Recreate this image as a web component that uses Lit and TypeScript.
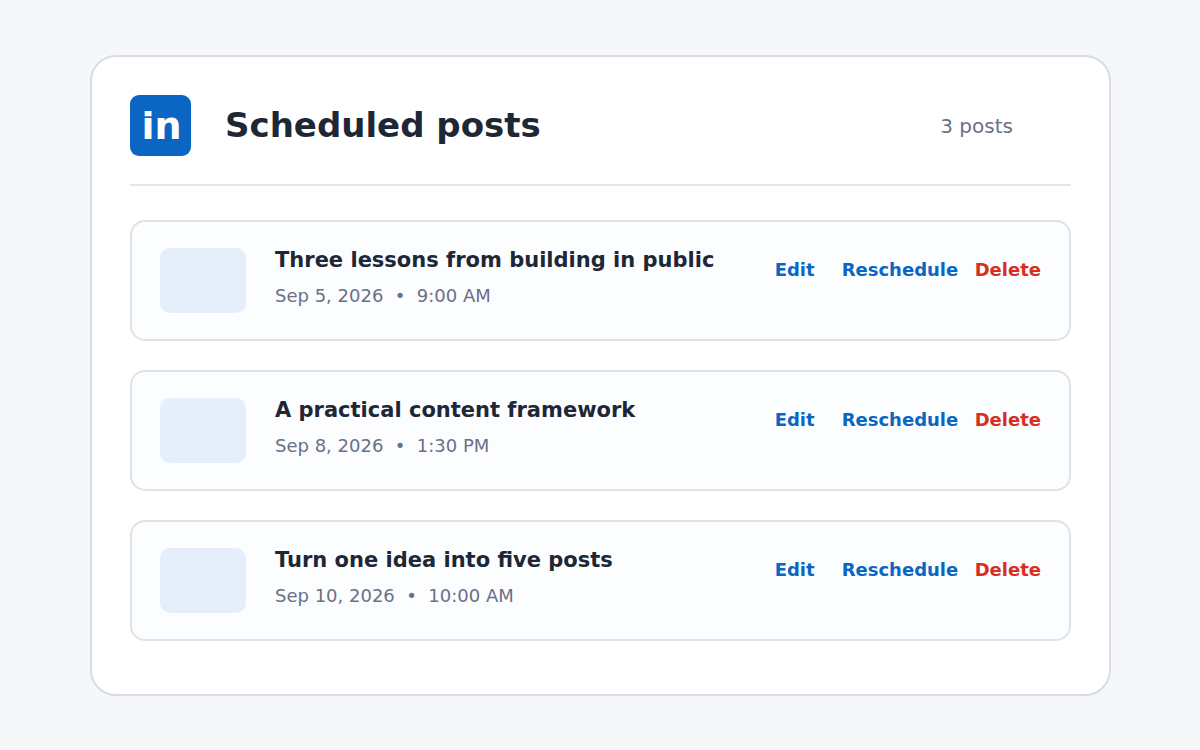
import { LitElement, html, css } from "lit";
import { customElement, property, state } from "lit/decorators.js";

interface Post {
  title: string;
  date: string;
  time: string;
}

@customElement("post-card")
class PostCard extends LitElement {
  @property({ attribute: false }) post!: Post;

  static styles = css`
    :host {
      display: block;
    }
    .card {
      box-sizing: border-box;
      display: flex;
      align-items: flex-start;
      gap: 29px;
      padding: 26px 28px;
      border: 2px solid #dfe3e6;
      border-radius: 15px;
      background: #fbfdff;
    }
    .thumb {
      flex: none;
      width: 86px;
      height: 65px;
      border-radius: 10px;
      background: #e5effc;
    }
    .info {
      flex: 1;
      min-width: 0;
    }
    .title {
      margin: 0;
      font-size: 21px;
      line-height: 24px;
      font-weight: 700;
      color: #1d2735;
    }
    .when {
      margin: 12px 0 0;
      font-size: 18px;
      line-height: 24px;
      color: #6a7086;
      white-space: pre;
    }
    .actions {
      display: grid;
      grid-template-columns: 67px 133px auto;
      padding-top: 10px;
    }
    .action {
      justify-self: start;
      margin: 0;
      padding: 0;
      border: 0;
      background: none;
      font: inherit;
      font-size: 18px;
      line-height: 24px;
      font-weight: 700;
      color: #0a66c2;
      cursor: pointer;
    }
    .danger {
      color: #d92d20;
    }
  `;

  render() {
    return html`
      <article class="card">
        <div class="thumb"></div>
        <div class="info">
          <h2 class="title">${this.post.title}</h2>
          <p class="when">${`${this.post.date}  •  ${this.post.time}`}</p>
        </div>
        <div class="actions">
          <button class="action" type="button">Edit</button>
          <button class="action" type="button">Reschedule</button>
          <button class="action danger" type="button">Delete</button>
        </div>
      </article>
    `;
  }
}

@customElement("app-root")
class AppRoot extends LitElement {
  @state() private posts: Post[] = [
    { title: "Three lessons from building in public", date: "Sep 5, 2026", time: "9:00 AM" },
    { title: "A practical content framework", date: "Sep 8, 2026", time: "1:30 PM" },
    { title: "Turn one idea into five posts", date: "Sep 10, 2026", time: "10:00 AM" },
  ];

  static styles = css`
    :host {
      display: block;
      box-sizing: border-box;
      min-height: 100vh;
      padding: 55px 89px 54px 90px;
      background: #f5f7f9;
      font-family: "DejaVu Sans", sans-serif;
    }
    .panel {
      padding: 38px 38px 53px;
      border: 2px solid #d7dde3;
      border-radius: 26px;
      background: #ffffff;
    }
    .header {
      display: flex;
      align-items: center;
      gap: 34px;
      padding: 0 58px 28px 0;
      border-bottom: 2px solid #e4e7ea;
    }
    .logo {
      box-sizing: border-box;
      flex: none;
      width: 61px;
      height: 61px;
      padding: 1px 0 0 2px;
      border-radius: 9px;
      background: #0a66c2;
      color: #ffffff;
      font-size: 38px;
      line-height: 60px;
      font-weight: 700;
      text-align: center;
    }
    .heading {
      flex: 1;
      margin: 0;
      font-size: 34px;
      line-height: 41px;
      font-weight: 700;
      color: #1d2735;
    }
    .count {
      font-size: 20px;
      line-height: 24px;
      color: #6a7086;
    }
    .list {
      display: grid;
      gap: 29px;
      margin: 34px 0 0;
      padding: 0;
      list-style: none;
    }
  `;

  render() {
    return html`
      <main class="panel">
        <header class="header">
          <div class="logo">in</div>
          <h1 class="heading">Scheduled posts</h1>
          <span class="count">${this.posts.length} posts</span>
        </header>
        <ul class="list">
          ${this.posts.map((post) => html`<li><post-card .post=${post}></post-card></li>`)}
        </ul>
      </main>
    `;
  }
}
